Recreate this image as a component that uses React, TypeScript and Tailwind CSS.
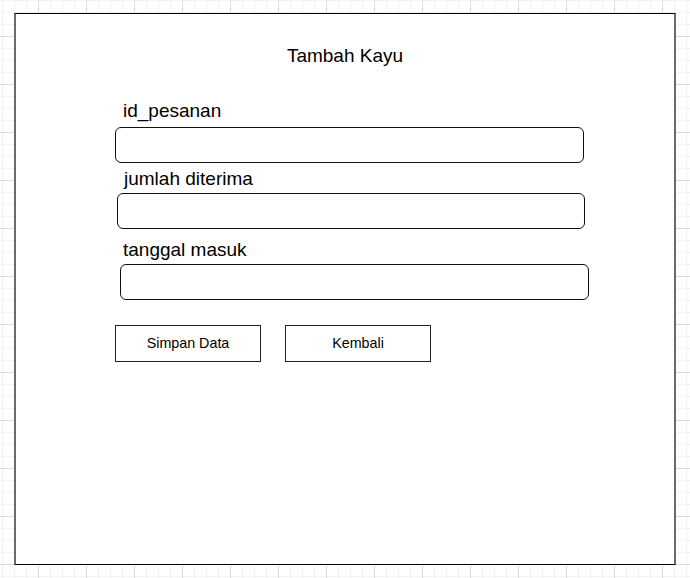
import React from 'react'

const fields = [
  { label: 'id_pesanan', labelCls: 'mt-[33px] ml-[107px]', boxCls: 'mt-[5px] ml-[99px] w-[469px]' },
  { label: 'jumlah diterima', labelCls: 'mt-[5px] ml-[108px]', boxCls: 'mt-[3px] ml-[101px] w-[468px]' },
  { label: 'tanggal masuk', labelCls: 'mt-[10px] ml-[107px]', boxCls: 'mt-[3px] ml-[104px] w-[469px]' },
]

export default function App() {
  return (
    <div
      className="w-[690px] h-[578px] overflow-hidden bg-white pt-[13px] pl-[14px] font-['Liberation_Sans',Arial,sans-serif] text-black bg-[linear-gradient(to_right,#dcdcdc_1px,transparent_1px),linear-gradient(to_bottom,#dcdcdc_1px,transparent_1px),linear-gradient(to_right,#f2f2f2_1px,transparent_1px),linear-gradient(to_bottom,#f2f2f2_1px,transparent_1px)] bg-size-[48px_48px,48px_48px,12px_12px,12px_12px] bg-position-[38px_36px,38px_36px,2px_0px,2px_0px]"
    >
      {/* form frame */}
      <div className="w-[662px] h-[552px] bg-white border-y border-y-black border-x-2 border-x-[#6b6b6b] flex flex-col items-start">
        <div className="mt-[31px] w-full text-center text-[19px] leading-[22px]">Tambah Kayu</div>

        {fields.map(f => (
          <React.Fragment key={f.label}>
            <div className={`${f.labelCls} text-[19px] leading-[22px]`}>{f.label}</div>
            <div className={`${f.boxCls} h-[36px] rounded-[6px] border border-[#111] bg-white`} />
          </React.Fragment>
        ))}

        <div className="mt-[25px] ml-[99px] flex gap-[24px]">
          <button className="w-[146px] h-[37px] border border-[#222] bg-white text-[14.3px] text-black">
            Simpan Data
          </button>
          <button className="w-[146px] h-[37px] border border-[#222] bg-white text-[14.3px] text-black">
            Kembali
          </button>
        </div>
      </div>
    </div>
  )
}
